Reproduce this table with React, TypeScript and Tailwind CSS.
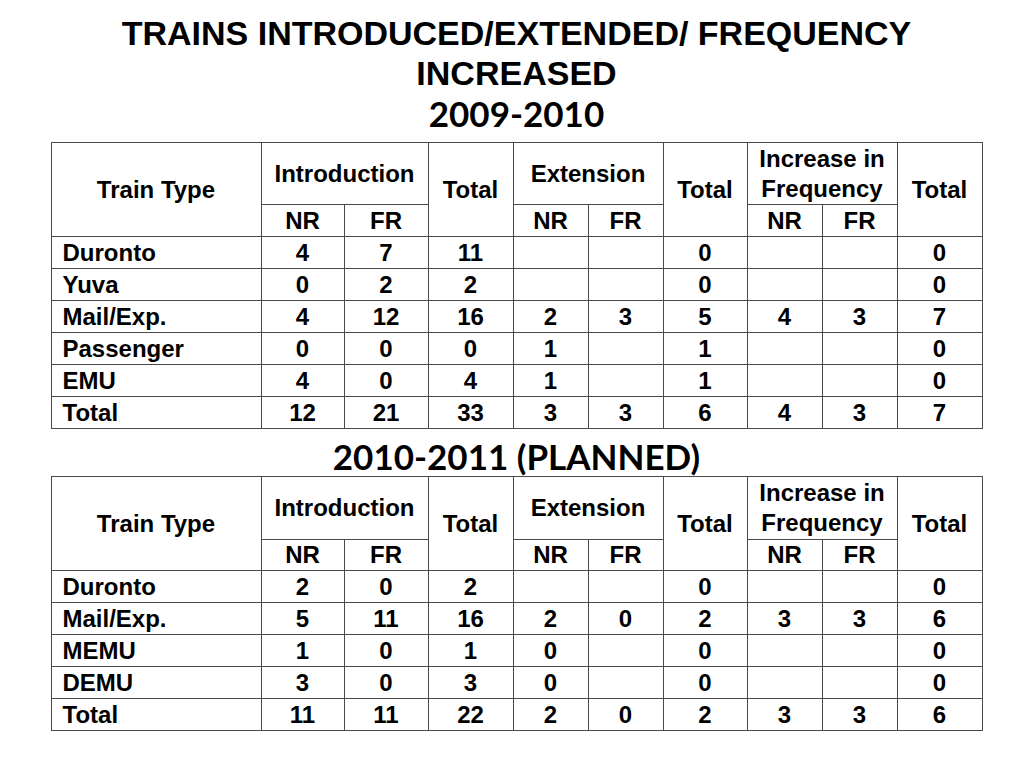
import React from "react";

type Row = [string, ...(string | number)[]];

const table2009: Row[] = [
  ["Duronto", 4, 7, 11, "", "", 0, "", "", 0],
  ["Yuva", 0, 2, 2, "", "", 0, "", "", 0],
  ["Mail/Exp.", 4, 12, 16, 2, 3, 5, 4, 3, 7],
  ["Passenger", 0, 0, 0, 1, "", 1, "", "", 0],
  ["EMU", 4, 0, 4, 1, "", 1, "", "", 0],
  ["Total", 12, 21, 33, 3, 3, 6, 4, 3, 7],
];

const table2010: Row[] = [
  ["Duronto", 2, 0, 2, "", "", 0, "", "", 0],
  ["Mail/Exp.", 5, 11, 16, 2, 0, 2, 3, 3, 6],
  ["MEMU", 1, 0, 1, 0, "", 0, "", "", 0],
  ["DEMU", 3, 0, 3, 0, "", 0, "", "", 0],
  ["Total", 11, 11, 22, 2, 0, 2, 3, 3, 6],
];

const widths = [210, 83, 84, 85, 75, 75, 84, 75, 75, 85];

const cell = "border border-[#4a4a4a] p-0 text-center align-middle";

const TrainTable = ({ rows, headHeight, subHeight }: { rows: Row[]; headHeight: string; subHeight: string }) => (
  <table className="table-fixed border-collapse w-[931px] text-[24px] font-bold leading-[30px] text-black">
    <colgroup>
      {widths.map((w, i) => (
        <col key={i} style={{ width: w }} />
      ))}
    </colgroup>
    <thead>
      <tr className={headHeight}>
        <th rowSpan={2} className={cell}>Train Type</th>
        <th colSpan={2} className={cell}>Introduction</th>
        <th rowSpan={2} className={cell}>Total</th>
        <th colSpan={2} className={cell}>Extension</th>
        <th rowSpan={2} className={cell}>Total</th>
        <th colSpan={2} className={cell}>
          Increase in
          <br />
          Frequency
        </th>
        <th rowSpan={2} className={cell}>Total</th>
      </tr>
      <tr className={subHeight}>
        <th className={cell}>NR</th>
        <th className={cell}>FR</th>
        <th className={cell}>NR</th>
        <th className={cell}>FR</th>
        <th className={cell}>NR</th>
        <th className={cell}>FR</th>
      </tr>
    </thead>
    <tbody>
      {rows.map((r) => (
        <tr key={r[0]} className="h-[32px]">
          {r.map((v, i) => (
            <td key={i} className={i === 0 ? `${cell} !text-left pl-[11px]` : cell}>
              {v}
            </td>
          ))}
        </tr>
      ))}
    </tbody>
  </table>
);

export default function App() {
  return (
    <div className="w-[1024px] h-[768px] bg-white font-[family-name:'Liberation_Sans',Arial,sans-serif]">
      <div className="ml-[51px] w-[931px] pt-[13px] flex flex-col items-center">
        <h1 className="text-[34px] leading-[40px] font-bold text-center text-black">
          TRAINS INTRODUCED/EXTENDED/ FREQUENCY
          <br />
          INCREASED
        </h1>
        <h2 className="mt-[5px] mb-[14px] font-[family-name:Lato,sans-serif] text-[35px] leading-[30px] font-bold text-black">
          2009-2010
        </h2>
        <TrainTable rows={table2009} headHeight="h-[62px]" subHeight="h-[32px]" />
        <h2 className="mt-[12px] mb-[5px] font-[family-name:Lato,sans-serif] text-[35px] leading-[30px] font-bold text-black">
          2010-2011 (PLANNED)
        </h2>
        <TrainTable rows={table2010} headHeight="h-[63px]" subHeight="h-[31px]" />
      </div>
    </div>
  );
}
